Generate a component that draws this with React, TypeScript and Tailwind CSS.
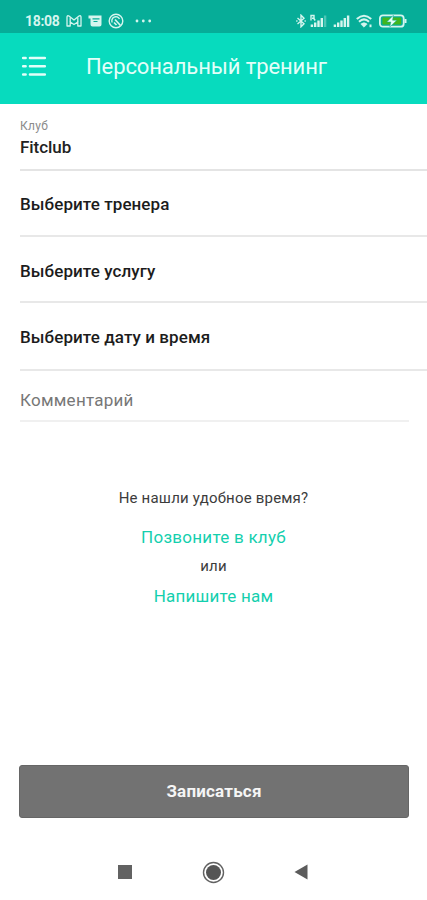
import React from "react";

const rows = [
  { title: "Выберите тренера", className: "h-[66px] pt-[4px]" },
  { title: "Выберите услугу", className: "h-[66px] pt-[5px]" },
  { title: "Выберите дату и время", className: "h-[68px] pt-[3px]" },
];

function Signal({ small = false }: { small?: boolean }) {
  return (
    <svg width="17" height="14" viewBox="0 0 17 14" fill="#d5f5ee">
      {small && (
        <path d="M1 6.5V1.5H4V4.2H2M3.5 4L5.2 6.5" stroke="#d5f5ee" strokeWidth="1.4" fill="none" />
      )}
      <rect x="0.7" y="10.5" width="2.4" height="2.5" />
      <rect x="4" y="8.5" width="2.4" height="4.5" />
      <rect x="7.3" y="6.5" width="2.4" height="6.5" />
      <rect x="10.6" y="4" width="2.4" height="9" />
      <rect x="13.9" y="1.5" width="2.4" height="11.5" opacity={small ? 0.35 : 1} />
    </svg>
  );
}

function StatusBar() {
  return (
    <div className="flex h-[33px] items-center bg-[#06ad98] pt-2 pl-[25px] text-[#d5f5ee]">
      <span className="w-[41px] text-[14px] leading-none font-bold tracking-[-0.3px] whitespace-nowrap">
        18:08
      </span>
      {/* mail */}
      <svg width="16" height="14" viewBox="0 0 16 14" fill="none" stroke="currentColor" strokeWidth="1.3" strokeLinejoin="round">
        <path d="M1 12V3.2Q1 1.2 3 2L8 6L13 2Q15 1.2 15 3.2V12H11.8V8L8 10.5L4.2 8V12Z" />
        <path d="M4.2 3.5V8M11.8 3.5V8" />
      </svg>
      {/* news */}
      <svg className="ml-[6px]" width="14" height="14" viewBox="0 0 14 14">
        <path d="M0.5 1.5H13.5V10.5Q13.5 12.5 11.5 12.5H4.5Q2.5 12.5 2.5 10.5V4.5H0.5Z" fill="currentColor" />
        <path d="M4.5 4.8H11.5M5.5 7.5H9.5" stroke="#06ad98" strokeWidth="1.2" />
      </svg>
      {/* muted circle */}
      <svg className="ml-[6px]" width="16" height="16" viewBox="0 0 16 16" fill="none" stroke="currentColor">
        <circle cx="8" cy="8" r="6.8" strokeWidth="1.4" />
        <path d="M4.2 9.5A4 4 0 0 1 11.5 6" strokeWidth="1.4" />
        <path d="M7 6.5L12.5 12.5M6 9.5L8.5 12" strokeWidth="1.7" />
      </svg>
      <svg className="ml-[11px]" width="17" height="4" viewBox="0 0 17 4" fill="currentColor">
        <circle cx="2" cy="2" r="1.4" />
        <circle cx="8.3" cy="2" r="1.4" />
        <circle cx="14.7" cy="2" r="1.4" />
      </svg>
      <div className="ml-auto flex items-center pr-[20px]">
        <svg width="10" height="14" viewBox="0 0 10 14" fill="none" stroke="currentColor" strokeWidth="1.4">
          <path d="M1.5 4L8 9.8L5 12.8V1.2L8 4.2L1.5 10" />
          <path d="M0.2 7H1.5M8.5 7H9.8" />
        </svg>
        <span className="ml-[4px]">
          <Signal small />
        </span>
        <span className="ml-[6px]">
          <Signal />
        </span>
        <svg className="ml-[6px]" width="17" height="14" viewBox="0 0 17 14" fill="none" stroke="currentColor">
          <path d="M0.8 5Q8 -1.5 15.2 5" strokeWidth="2.1" />
          <path d="M3 7.7Q8 3.2 13 7.7" strokeWidth="2.1" />
          <path d="M4.8 10Q8 7.3 11.2 10L8 13.2Z" fill="currentColor" strokeWidth="0.6" />
          <path d="M14.5 10.5V13.2" strokeWidth="2" />
        </svg>
        <svg className="ml-[6px]" width="28" height="14" viewBox="0 0 28 14">
          <rect x="0.9" y="1.3" width="23.8" height="11.4" rx="3" fill="none" stroke="currentColor" strokeWidth="1.8" />
          <rect x="3.4" y="3.4" width="18.8" height="7.2" rx="1" fill="#42b61e" />
          <path d="M25.5 5H27.5V9H25.5Z" fill="currentColor" />
          <path d="M14.4 1.2L7.8 8H11.8L10.8 13L17.8 6.2H13.6Z" fill="#e8fff8" stroke="#06ad98" strokeWidth="0.5" />
        </svg>
      </div>
    </div>
  );
}

function Header() {
  return (
    <header className="flex h-[71px] items-center bg-[#07dbbe] pb-[5px] pl-[21px] text-[#e2fff9]">
      <svg width="26" height="22" viewBox="0 0 26 22" stroke="currentColor" strokeWidth="2.6" strokeLinecap="round">
        <path d="M2.2 3H4.6M9 3H23.8M2.2 11.2H4.6M9 11.2H23.8M2.2 19.5H4.6M9 19.5H23.8" />
      </svg>
      <h1 className="ml-[39px] pt-[2px] text-[22px] leading-none tracking-[-0.1px] whitespace-nowrap">
        Персональный тренинг
      </h1>
    </header>
  );
}

export default function App() {
  return (
    <div className="flex h-[900px] w-[427px] flex-col overflow-hidden bg-white font-['Roboto',sans-serif]">
      <StatusBar />
      <Header />

      <main className="pl-5">
        <div className="h-[67px] border-b-2 border-[#e4e4e4] pt-[15px]">
          <p className="text-[12px] leading-[14px] tracking-[0.3px] text-[#8c8c8c]">Клуб</p>
          <p className="mt-[4px] text-[17px] leading-5 font-medium tracking-[-0.05px] text-[#222]">Fitclub</p>
        </div>
        {rows.map((row) => (
          <div
            key={row.title}
            className={`flex items-center border-b-2 border-[#e8e8e8] text-[17px] font-medium tracking-[0.08px] text-[#1c1c1c] ${row.className}`}
          >
            {row.title}
          </div>
        ))}
        <div className="mr-[18px] flex h-[51px] items-center border-b-2 border-[#f0f0f0] pt-[11px] text-[17px] tracking-[0.25px] text-[#777]">
          Комментарий
        </div>
      </main>

      <section className="mt-[65px] flex flex-col items-center text-[#3c3c3c]">
        <p className="text-[15px] leading-[22px] tracking-[0.2px]">Не нашли удобное время?</p>
        <a className="mt-[16px] text-[17px] leading-6 tracking-[0.26px] text-[#14cfae]">Позвоните в клуб</a>
        <p className="mt-[6px] text-[15px] leading-[22px] tracking-[0.2px]">или</p>
        <a className="mt-[7px] text-[17px] leading-6 tracking-[0.22px] text-[#14cfae]">Напишите нам</a>
      </section>

      <button className="mr-[18px] ml-[19px] mt-auto h-[53px] shrink-0 rounded-[3px] border border-[#666] bg-[#727272] pt-px text-[17px] font-bold tracking-[0.2px] text-[#f5f5f5]">
        Записаться
      </button>

      <nav className="mt-[28px] flex h-[54px] shrink-0 items-start pl-[118px]">
        <span className="mt-[19px] h-[14px] w-[14px] bg-[#626262]" />
        <svg className="mt-[15px] ml-[70px]" width="23" height="23" viewBox="0 0 23 23">
          <circle cx="11.5" cy="11.5" r="10" fill="none" stroke="#626262" strokeWidth="1.4" />
          <circle cx="11.5" cy="11.5" r="7.5" fill="#555" />
        </svg>
        <svg className="mt-[18px] ml-[69px]" width="14" height="16" viewBox="0 0 14 16" fill="#5c5c5c">
          <path d="M13.5 0.5V15.5L0.5 8Z" />
        </svg>
      </nav>
    </div>
  );
}
